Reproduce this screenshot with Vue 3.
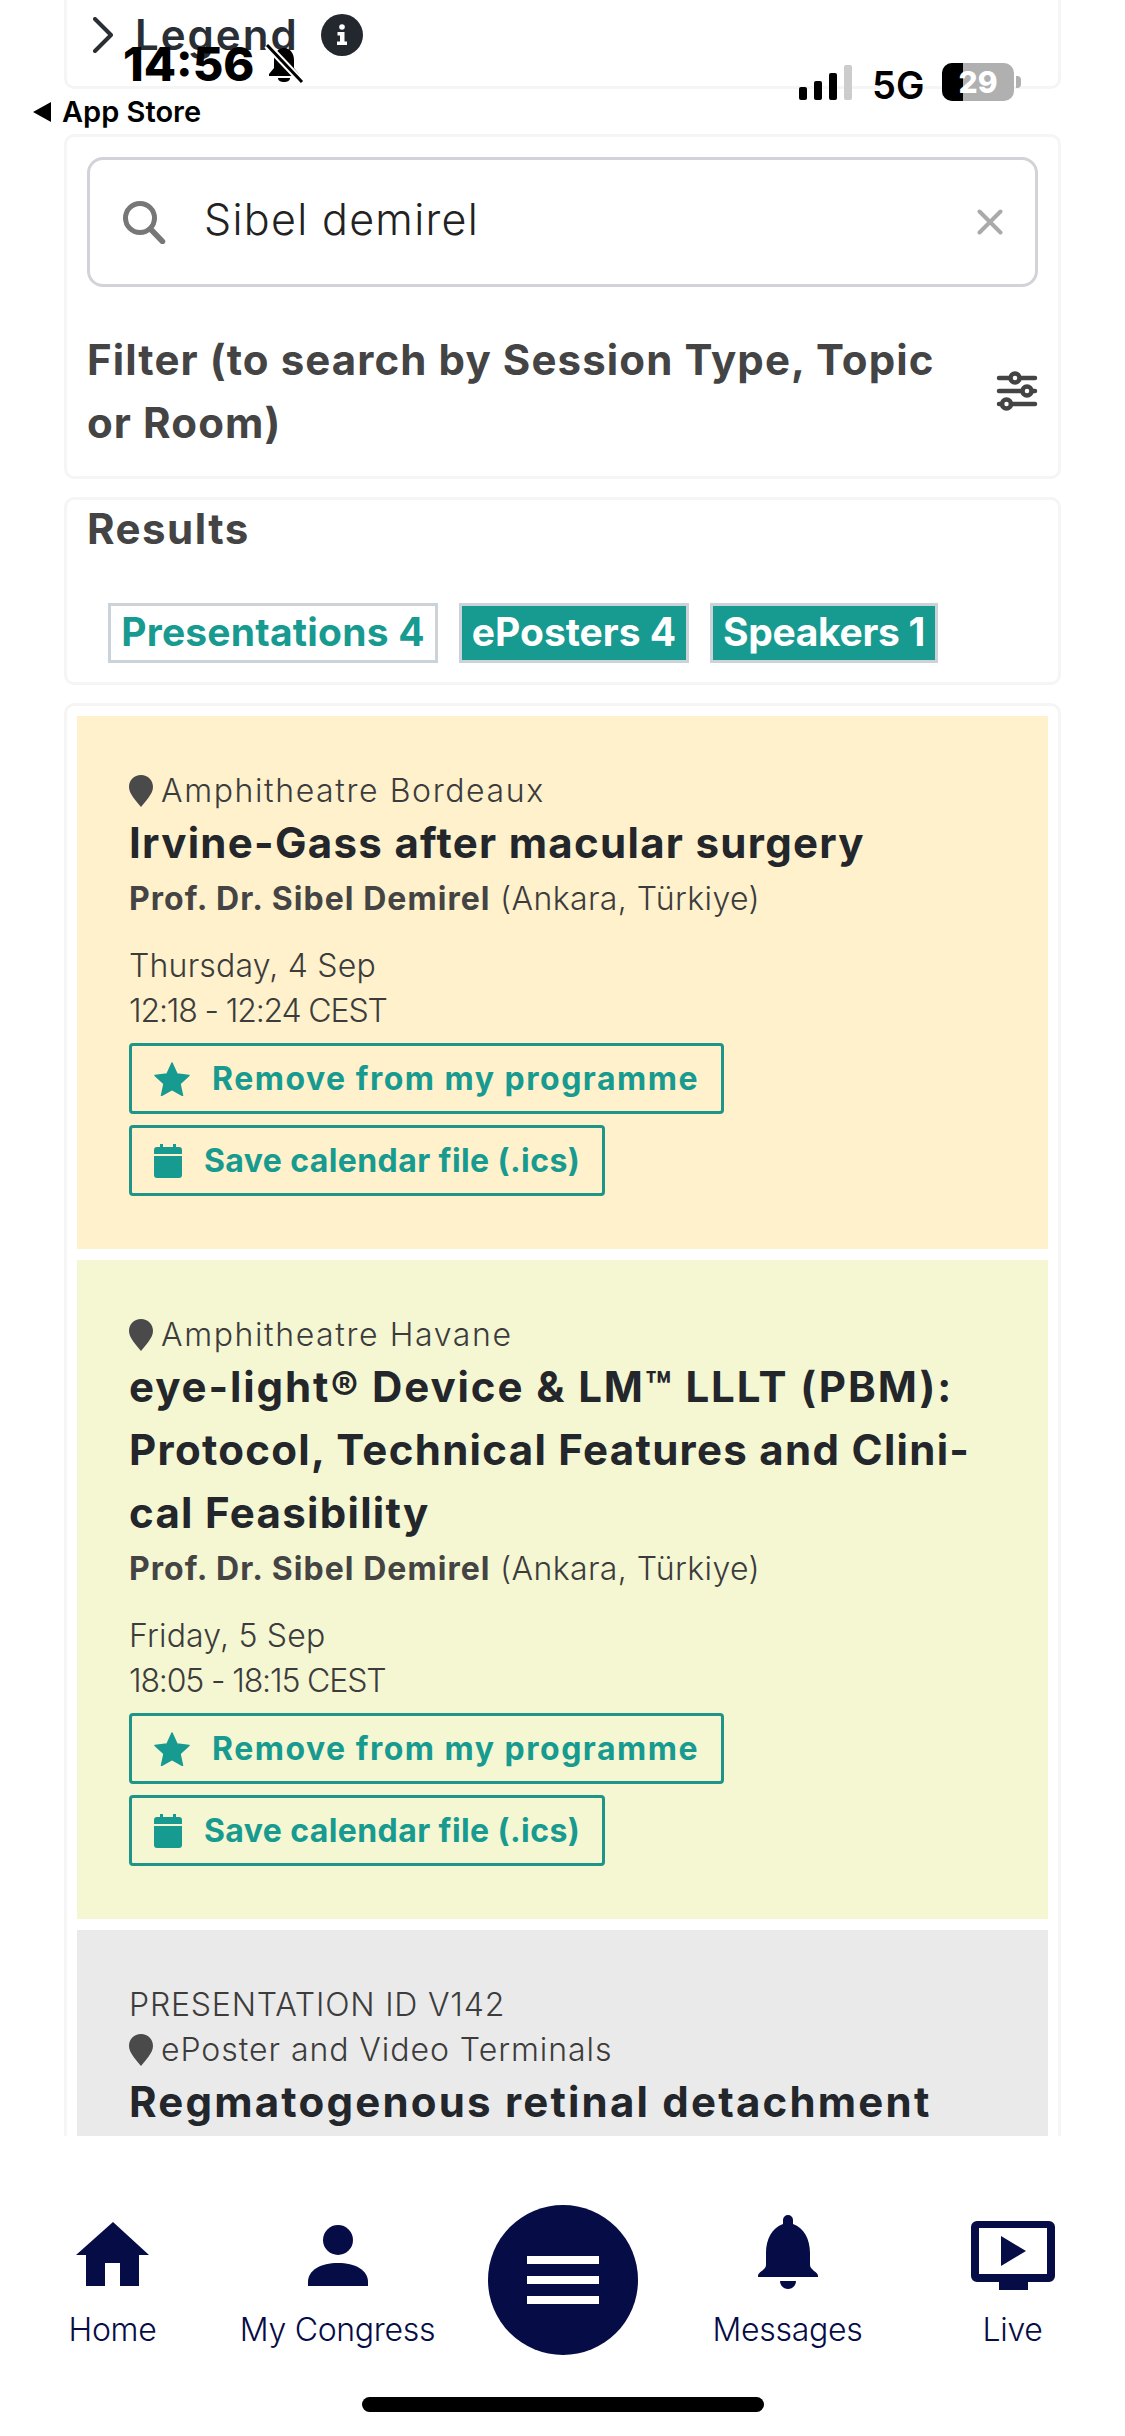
<script setup>
const items = [
  { tone: 'amber', location: 'Amphitheatre Bordeaux', lead: 'Irvine-Gass after macular surgery', rest: '', day: 'Thursday, 4 Sep', time: '12:18 - 12:24 CEST' },
  { tone: 'lime', location: 'Amphitheatre Havane', lead: 'eye-light® Device & LM™ LLLT (PBM):', rest: ' Protocol, Technical Features and Clini-cal Feasibility', wide: true, day: 'Friday, 5 Sep', time: '18:05 - 18:15 CEST' },
]
</script>

<template>
  <div class="phone">
    <main class="scroll">
      <section class="card legend">
        <svg class="chev" viewBox="0 0 20 36"><path d="M2 2l16 16L2 34" fill="none" stroke="#2a2e35" stroke-width="4" stroke-linecap="round" stroke-linejoin="round"/></svg>
        <span class="legend-text">Legend</span>
        <svg class="info" viewBox="0 0 42 42"><circle cx="21" cy="21" r="21" fill="#23282e"/><path d="M16.500 18h7v9.500h2.500v3.500H16v-3.500h3V21.500h-2.500z" fill="#fff"/><circle cx="21" cy="13" r="2.800" fill="#fff"/></svg>
      </section>

      <section class="card search-card">
        <div class="search">
          <svg class="mag" viewBox="0 0 44 44"><circle cx="18" cy="18" r="14.500" fill="none" stroke="#777" stroke-width="5"/><path d="M28.500 29l12 12.500" stroke="#777" stroke-width="5.500" stroke-linecap="round"/></svg>
          <span class="query">Sibel demirel</span>
          <svg class="clear" viewBox="0 0 26 26"><path d="M2.500 2.500l21 21M23.500 2.500l-21 21" stroke="#aaa" stroke-width="4" stroke-linecap="round"/></svg>
        </div>
        <div class="filter">
          <h2 class="filter-title">Filter (to search by Session Type, Topic or Room)</h2>
          <svg class="sliders" viewBox="0 0 42 40" fill="none" stroke="#444" stroke-width="4.500" stroke-linecap="round">
            <path d="M3 7h11M24 7h15M3 20h23M36 20h3M3 33h3M15 33h24"/>
            <circle cx="19" cy="7" r="4.500"/><circle cx="31" cy="20" r="4.500"/><circle cx="10.500" cy="33" r="4.500"/>
          </svg>
        </div>
      </section>

      <section class="card results">
        <h2 class="results-title">Results</h2>
        <div class="tabs">
          <span class="tab tab-a active">Presentations 4</span>
          <span class="tab tab-b">ePosters 4</span>
          <span class="tab tab-c">Speakers 1</span>
        </div>
      </section>

      <section class="card list">
        <article v-for="item in items" :key="item.lead" class="item" :class="item.tone">
          <div class="meta loc">
            <svg class="pin" viewBox="0 0 24 32"><path d="M12 0C5 0 0 5 0 12c0 7 8 15 12 20 4-5 12-13 12-20C24 5 19 0 12 0z" fill="#4a4a4a"/></svg>
            {{ item.location }}
          </div>
          <h3 class="title"><span :class="{ wide: item.wide }">{{ item.lead }}</span>{{ item.rest }}</h3>
          <div class="meta speaker"><strong>Prof. Dr. Sibel Demirel</strong> (Ankara, Türkiye)</div>
          <div class="meta day">{{ item.day }}</div>
          <div class="meta time">{{ item.time }}</div>
          <div class="buttons">
            <span class="btn remove">
              <svg class="star" viewBox="0 0 36 34"><path d="M18 1l5 11 12 1.500-9 8.300 2.500 11.700L18 27.500 7.500 33.500 10 21.800 1 13.500 13 12z" fill="#179a90" stroke="#179a90" stroke-width="1.500" stroke-linejoin="round"/></svg>
              Remove from my programme
            </span>
            <span class="btn save">
              <svg class="cal" viewBox="0 0 28 34"><path d="M6 0h3v5H6zM19 0h3v5h-3z" fill="#179a90"/><path d="M3 3h22a3 3 0 0 1 3 3v4H0V6a3 3 0 0 1 3-3zM0 12h28v19a3 3 0 0 1-3 3H3a3 3 0 0 1-3-3z" fill="#179a90"/></svg>
              Save calendar file (.ics)
            </span>
          </div>
        </article>
        <article class="item grey">
          <div class="meta pid">PRESENTATION ID V142</div>
          <div class="meta loc loc-b">
            <svg class="pin" viewBox="0 0 24 32"><path d="M12 0C5 0 0 5 0 12c0 7 8 15 12 20 4-5 12-13 12-20C24 5 19 0 12 0z" fill="#4a4a4a"/></svg>
            ePoster and Video Terminals
          </div>
          <h3 class="title regma">Regmatogenous retinal detachment</h3>
        </article>
      </section>
    </main>

    <nav class="nav">
      <div class="nav-item">
        <svg class="nav-icon" viewBox="0 0 74 64"><path d="M37 0l36 33H63v31H44V41H29v23H10V33H0z" fill="#060c45"/></svg>
        <span>Home</span>
      </div>
      <div class="nav-item">
        <svg class="nav-icon" viewBox="0 0 74 64"><circle cx="37" cy="18" r="15" fill="#060c45"/><path d="M7 64v-4C7 48 20 41 37 41s30 7 30 19v4z" fill="#060c45"/></svg>
        <span>My Congress</span>
      </div>
      <div class="nav-item center">
        <button class="menu" aria-label="Menu"><i></i><i></i><i></i></button>
      </div>
      <div class="nav-item">
        <svg class="nav-icon bell" viewBox="0 0 60 74"><path d="M30 0a5 5 0 0 1 5 5v4c11 4 17 15 17 29v12c0 5 8 7 8 11v1H0v-1c0-4 8-6 8-11V38C8 24 14 13 25 9V5a5 5 0 0 1 5-5z" fill="#060c45"/><path d="M22 66h16c0 5-4 8-8 8s-8-3-8-8z" fill="#060c45"/></svg>
        <span>Messages</span>
      </div>
      <div class="nav-item">
        <svg class="nav-icon live" viewBox="0 0 84 69"><path d="M6 0h72a6 6 0 0 1 6 6v49a6 6 0 0 1-6 6H57v8H28v-8H6a6 6 0 0 1-6-6V6a6 6 0 0 1 6-6zm2 7v46h68V7z" fill="#060c45" fill-rule="evenodd"/><path d="M30 15l25 15-25 15z" fill="#060c45"/></svg>
        <span>Live</span>
      </div>
    </nav>
    <div class="home-bar"></div>

    <div class="status">
      <span class="clock">14:56</span>
      <svg class="mute" viewBox="0 0 40 40"><path d="M20 5c-6 0-10 5-10 12v8l-5 6v2h30v-2l-5-6v-8c0-7-4-12-10-12z" fill="#000"/><path d="M14 35h12c0 3-3 4-6 4s-6-1-6-4z" fill="#000"/><path d="M3 2l35 37" stroke="#fff" stroke-width="7"/><path d="M3 2l35 37" stroke="#000" stroke-width="3"/></svg>
      <div class="back"><svg viewBox="0 0 18 20" class="back-tri"><path d="M18 0v20L0 10z" fill="#000"/></svg>App Store</div>
      <div class="signal"><i class="b1"></i><i class="b2"></i><i class="b3"></i><i class="b4"></i></div>
      <span class="net">5G</span>
      <div class="battery"><span class="fill"></span><span class="pct">29</span></div>
      <span class="nub"></span>
    </div>
  </div>
</template>

<style scoped>
.phone {
  position: relative;
  width: 1125px;
  height: 2436px;
  overflow: hidden;
  background: #fff;
  font-family: Inter, "Noto Sans", sans-serif;
  display: flex;
  flex-direction: column;
}
.scroll {
  height: 2136px;
  overflow: hidden;
  flex: none;
  display: flex;
  flex-direction: column;
  gap: 18px;
  padding: 0 64px;
  box-sizing: border-box;
}
.card {
  border: 3px solid #f5f5f6;
  border-radius: 10px;
  background: #fff;
  box-sizing: border-box;
  flex: none;
}
.legend {
  height: 89px;
  border-top: 0;
  border-radius: 0 0 10px 10px;
  margin-bottom: 27px;
  padding: 14px 0 0 26px;
  display: flex;
  align-items: flex-start;
}
.chev { width: 20px; height: 36px; margin-top: 3px; }
.legend-text {
  margin-left: 22px;
  font-size: 42px;
  line-height: 42px;
  font-weight: 600;
  letter-spacing: 2px;
  color: #2a2e35;
}
.info { width: 42px; height: 42px; margin-left: 22px; }

.search-card { height: 345px; padding: 20px 20px 0; }
.search {
  height: 130px;
  border: 3.500px solid #d2d3d8;
  border-radius: 16px;
  box-sizing: border-box;
  display: flex;
  align-items: center;
  padding: 0 32px;
}
.mag { width: 44px; height: 44px; flex: none; }
.query {
  margin-left: 38px;
  padding-bottom: 7px;
  font-size: 43px;
  font-weight: 300;
  letter-spacing: 1.300px;
  color: #222;
  flex: 1;
}
.clear { width: 26px; height: 26px; flex: none; }
.filter {
  display: flex;
  align-items: center;
  justify-content: space-between;
  margin-top: 41px;
}
.filter-title {
  margin: 0;
  width: 880px;
  font-size: 42px;
  line-height: 63px;
  font-weight: 700;
  letter-spacing: 1.100px;
  color: #444;
}
.sliders { width: 42px; height: 40px; flex: none; }

.results { height: 188px; padding: 0 20px; }
.results-title {
  margin: 0;
  font-size: 42px;
  line-height: 58px;
  font-weight: 700;
  letter-spacing: 1.500px;
  color: #444;
}
.tabs { display: flex; gap: 21px; margin-top: 45px; padding-left: 21px; }
.tab {
  height: 60px;
  box-sizing: border-box;
  border: 3.500px solid #ccd3d8;
  background: #179a90;
  color: #fff;
  font-size: 39px;
  line-height: 52px;
  font-weight: 700;
  text-align: center;
  white-space: nowrap;
}
.tab.active { background: #fff; color: #179a90; }
.tab-a { width: 330px; letter-spacing: 0.200px; }
.tab-b { width: 230px; }
.tab-c { width: 228px; letter-spacing: -0.300px; }

.list {
  border-bottom: 0;
  border-radius: 10px 10px 0 0;
  padding: 10px 10px 0;
  display: flex;
  flex-direction: column;
  gap: 11px;
}
.item { padding: 52px 52px 53px; }
.amber { background: #fef1cb; }
.lime { background: #f5f6d2; }
.grey { background: #eaeaea; }
.meta {
  font-size: 32px;
  line-height: 45px;
  font-weight: 300;
  color: #3c3c3c;
  white-space: nowrap;
}
.speaker { letter-spacing: 0.400px; }
.meta strong { font-weight: 700; color: #444; letter-spacing: 1.050px; }
.loc { display: flex; align-items: center; gap: 8px; letter-spacing: 1.600px; }
.loc-b { letter-spacing: 0.950px; }
.pid { letter-spacing: 0.800px; }
.day { margin-top: 22px; letter-spacing: 0.200px; }
.time { letter-spacing: -1.150px; }
.pin { width: 24px; height: 32px; flex: none; }
.title {
  margin: -2px 0 2px;
  font-size: 42px;
  line-height: 63px;
  font-weight: 700;
  letter-spacing: 1.300px;
  color: #23262b;
}
.wide { letter-spacing: 1.900px; }
.regma { letter-spacing: 2.200px; }
.buttons {
  margin-top: 10px;
  display: flex;
  flex-direction: column;
  align-items: flex-start;
  gap: 11px;
}
.btn {
  height: 71px;
  box-sizing: border-box;
  border: 3.500px solid #1f9488;
  border-radius: 4px;
  display: flex;
  align-items: center;
  padding: 0 22px;
  color: #179a90;
  font-size: 32px;
  font-weight: 700;
  white-space: nowrap;
}
.remove { letter-spacing: 1.500px; }
.save { letter-spacing: 0.400px; }
.star { width: 36px; height: 34px; margin-right: 22px; }
.cal { width: 28px; height: 34px; margin-right: 22px; }

.nav {
  display: grid;
  grid-template-columns: repeat(5, 225px);
  height: 250px;
  flex: none;
}
.nav-item {
  display: flex;
  flex-direction: column;
  align-items: center;
  padding-top: 86px;
  font-size: 32px;
  line-height: 40px;
  font-weight: 300;
  letter-spacing: -0.300px;
  color: #060c45;
}
.nav-item span { margin-top: 24px; }
.nav-icon { width: 74px; height: 64px; flex: none; }
.bell { width: 60px; height: 74px; margin-top: -7px; margin-bottom: -3px; }
.live { width: 84px; height: 69px; margin-top: -1px; margin-bottom: -4px; }
.center { padding-top: 69px; }
.menu {
  width: 150px;
  height: 150px;
  border: 0;
  border-radius: 50%;
  background: #060c45;
  padding: 0;
  display: flex;
  flex-direction: column;
  align-items: center;
  justify-content: center;
  gap: 12px;
}
.menu i { width: 72px; height: 8px; background: #fff; display: block; }
.home-bar {
  position: absolute;
  left: 362px;
  top: 2397px;
  width: 402px;
  height: 15px;
  border-radius: 8px;
  background: #000;
}

/* system status bar sits over the page content */
.status { position: absolute; left: 0; top: 0; width: 1125px; height: 130px; color: #000; }
.clock { position: absolute; left: 123px; top: 39px; font-size: 47px; line-height: 50px; font-weight: 800; }
.mute { position: absolute; left: 264px; top: 43px; width: 40px; height: 40px; }
.back { position: absolute; left: 33px; top: 97px; display: flex; align-items: center; gap: 11px; font-size: 29px; line-height: 30px; font-weight: 600; }
.back-tri { width: 18px; height: 20px; }
.signal { position: absolute; left: 799px; top: 65px; display: flex; align-items: flex-end; gap: 7px; height: 35px; }
.signal i { display: block; width: 8px; border-radius: 2px; background: #000; }
.b1 { height: 13px; } .b2 { height: 19px; } .b3 { height: 27px; } .b4 { height: 35px; background: #ccc !important; }
.net { position: absolute; left: 872px; top: 65px; font-size: 38px; line-height: 40px; font-weight: 600; }
.battery { position: absolute; left: 942px; top: 63px; width: 72px; height: 38px; border-radius: 10px; background: #b0b0b0; overflow: hidden; }
.fill { position: absolute; left: 0; top: 0; bottom: 0; width: 21px; background: #000; }
.pct { position: relative; display: block; text-align: center; font-size: 30px; line-height: 38px; font-weight: 800; color: #fff; }
.nub { position: absolute; left: 1016px; top: 76px; width: 5px; height: 12px; border-radius: 0 4px 4px 0; background: #b0b0b0; }
</style>
